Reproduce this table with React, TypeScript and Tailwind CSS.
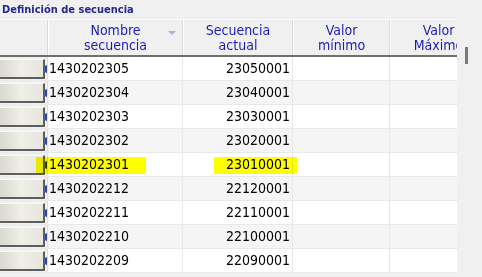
const rows = [
  { name: '1430202305', seq: '23050001' },
  { name: '1430202304', seq: '23040001' },
  { name: '1430202303', seq: '23030001' },
  { name: '1430202302', seq: '23020001' },
  { name: '1430202301', seq: '23010001', marked: true },
  { name: '1430202212', seq: '22120001' },
  { name: '1430202211', seq: '22110001' },
  { name: '1430202210', seq: '22100001' },
  { name: '1430202209', seq: '22090001' },
];

const font = { fontFamily: '"DejaVu Sans Condensed", "Liberation Sans", sans-serif' };

function HeaderCell({ w, top, bottom, sort }: { w: string; top: string; bottom: string; sort?: boolean }) {
  return (
    <div className={`${w} relative shrink-0 h-full flex flex-col items-center justify-center border-r border-[#dadada] border-l border-l-white text-[14px] leading-[15px] text-[#1c1cb4] whitespace-nowrap`}>
      <span>{top}</span>
      <span>{bottom}</span>
      {sort && (
        <svg className="absolute right-[6px] top-[11px]" width="8" height="5" viewBox="0 0 8 5">
          <path d="M0 0 L8 0 L4 4 Z" fill="#a3b6d2" />
        </svg>
      )}
    </div>
  );
}

export default function App() {
  return (
    <div className="w-[482px] h-[277px] bg-[#f0f0f0] overflow-hidden flex flex-col" style={font}>
      <div className="h-[19px] pl-[2px] pt-[3px] text-[11px] leading-[13px] font-bold text-[#23288f]">
        Definición de secuencia
      </div>
      <div className="flex">
        <div className="w-[457px] overflow-hidden">
          <div className="w-[487px]">
            {/* header */}
            <div className="h-[38px] flex bg-[#f0f0f0] border-t border-[#fafafa] border-b-2 border-b-[#6f6f6f]">
              <div className="w-[48px] shrink-0 h-full border-r border-[#dadada]" />
              <HeaderCell w="w-[135px]" top="Nombre" bottom="secuencia" sort />
              <HeaderCell w="w-[110px]" top="Secuencia" bottom="actual" />
              <HeaderCell w="w-[97px]" top="Valor" bottom="mínimo" />
              <HeaderCell w="w-[97px]" top="Valor" bottom="Máximo" />
            </div>
            {/* rows */}
            {rows.map((r, i) => (
              <div
                key={r.name}
                className={`relative h-[24px] flex border-b border-[#e9e9e9] text-[14px] text-black ${i % 2 === 0 ? 'bg-white' : 'bg-[#f5f5f5]'}`}
              >
                <div className="w-[48px] shrink-0 h-full flex items-center bg-[#f0f0f0] border-r border-[#e0e0e0]">
                  <div className="w-[45px] h-[20px] bg-gradient-to-r from-[#d9d9cf] via-[#efefe8] to-[#e6e6de] border-t border-t-[#fbfbfb] border-r-2 border-b-2 border-[#5e5e5e]" />
                  <div className="w-[2px] h-[8px] rounded-l-full border-l-2 border-[#2346c8]" />
                </div>
                <div className="w-[135px] shrink-0 h-full flex items-center pl-[1px] border-r border-[#e9e9e9]">
                  <span className="relative">{r.name}</span>
                </div>
                <div className="w-[110px] shrink-0 h-full flex items-center justify-end pr-[2px] border-r border-[#e9e9e9]">
                  <span className="relative">{r.seq}</span>
                </div>
                <div className="w-[97px] shrink-0 h-full border-r border-[#e9e9e9]" />
                <div className="w-[97px] shrink-0 h-full border-r border-[#e9e9e9]" />
                {r.marked && (
                  <>
                    <div className="absolute left-[36px] top-[4px] w-[110px] h-[17px] bg-[#ffff00] mix-blend-multiply" />
                    <div className="absolute left-[214px] top-[4px] w-[83px] h-[17px] bg-[#ffff00] mix-blend-multiply" />
                  </>
                )}
              </div>
            ))}
          </div>
        </div>
        <div className="w-[25px] relative">
          <div className="absolute left-[8px] top-[28px] w-[3px] h-[17px] bg-[#7b7b7b]" />
        </div>
      </div>
    </div>
  );
}
